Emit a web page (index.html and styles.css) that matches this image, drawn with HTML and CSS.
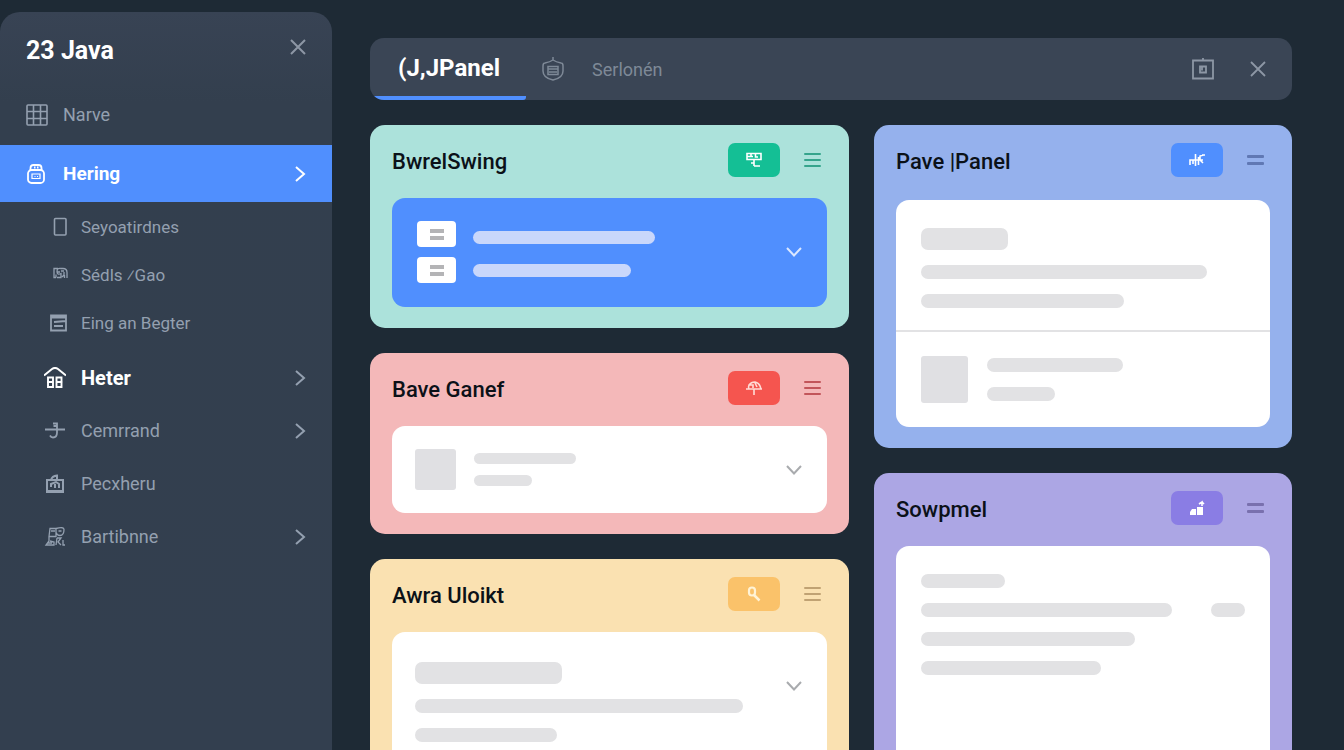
FILE: index.html
```html
<!DOCTYPE html>
<html lang="en">
<head>
<meta charset="utf-8">
<meta name="viewport" content="width=device-width, initial-scale=1">
<title>Java Panel</title>
<link rel="stylesheet" href="styles.css">
</head>
<body>
<div class="app">
  <aside class="sidebar">
    <header class="sidebar-head">
      <h1 class="brand">23 Java</h1>
      <button class="icon-btn" aria-label="Close sidebar"><svg width="16" height="16" viewBox="0 0 16 16"><path d="M1 1l14 14M15 1L1 15"/></svg></button>
    </header>
    <nav class="nav">
      <a class="nav-item nav-first" href="#narve">
        <svg class="icon" width="22" height="22" viewBox="0 0 22 22"><rect x="1" y="1" width="20" height="20" rx="1"/><path d="M7.500 1v20M14.500 1v20M1 7.500h20M1 14.500h20"/></svg>
        <span class="label">Narve</span>
      </a>
      <a class="nav-item nav-active" href="#hering" aria-current="page">
        <svg class="icon" width="22" height="22" viewBox="0 0 22 22"><path d="M4.500 7V5q0-3 3-3h5q3 0 3 3v2M8 4.500h1.500M11 4.500h1.500" stroke-width="1.800"/><rect x="2" y="7" width="16" height="13" rx="3.500" stroke-width="1.800"/><path d="M6 11h8v4.500H6zM8.500 13.500h1M11 13.500h1" stroke-width="1.200"/></svg>
        <span class="label">Hering</span>
        <svg class="chev" width="12" height="16" viewBox="0 0 12 16"><path d="M2 1l8 7-8 7"/></svg>
      </a>
      <div class="subnav">
        <a class="nav-item nav-sub" href="#sub1">
          <svg class="icon" width="22" height="20" viewBox="0 0 22 20"><rect x="7.500" y="1.500" width="11.500" height="16.500" rx="1"/></svg>
          <span class="label">Seyoatirdnes</span>
        </a>
        <a class="nav-item nav-sub" href="#sub2">
          <svg class="icon thin" width="22" height="20" viewBox="0 0 22 20"><path d="M11 3.500H7v9h2M9 9.500v3M10 7h3M14 3.500q-4-1-4 3t4 2v4h-4M14 3.500h2q4 0 4 4v5.500M14 6h3M17 7v3l-2 2M17.500 10v3"/></svg>
          <span class="label">Sédls ⁄Gao</span>
        </a>
        <a class="nav-item nav-sub" href="#sub3">
          <svg class="icon" width="22" height="20" viewBox="0 0 22 20"><path d="M4 2.500h15v15H4zM4 4.500h15M7 9l12-1M7 13h9" stroke-width="1.800"/></svg>
          <span class="label">Eing an Begter</span>
        </a>
      </div>
      <a class="nav-item nav-inner nav-strong" href="#heter">
        <svg class="icon" width="22" height="22" viewBox="0 0 22 22"><path d="M0 8.500L8 2q3-2 6 0l8 6.500" stroke-width="2"/><path d="M4 10.500h5V20H4zM12.500 10.500h5V20h-5zM3 15h6M12.500 15h6" stroke-width="1.900"/></svg>
        <span class="label">Heter</span>
        <svg class="chev" width="12" height="16" viewBox="0 0 12 16"><path d="M2 1l8 7-8 7"/></svg>
      </a>
      <a class="nav-item nav-inner" href="#cemrrand">
        <svg class="icon" width="22" height="22" viewBox="0 0 22 22"><path d="M1 9.500h20" stroke-width="2"/><path d="M9 3.500h4v9q0 5-4 5-2 0-3-2M9.500 6H13" stroke-width="1.800"/></svg>
        <span class="label">Cemrrand</span>
        <svg class="chev" width="12" height="16" viewBox="0 0 12 16"><path d="M2 1l8 7-8 7"/></svg>
      </a>
      <a class="nav-item nav-inner" href="#pecxheru">
        <svg class="icon" width="22" height="22" viewBox="0 0 22 22"><path d="M3 7h16v12H3zM7 7q1-4 6-4.500V7M3 18h16M7 14v-3l5-2 3 2v4M11 11v4" stroke-width="2"/></svg>
        <span class="label">Pecxheru</span>
      </a>
      <a class="nav-item nav-inner" href="#bartibnne">
        <svg class="icon thin" width="22" height="22" viewBox="0 0 22 22"><path d="M6 2.500h6v8H5zM7 5h4M12 2.500q8-2 8 1 0 6-4 6-3 0-4-3M14.500 5h3M5 11v4l-3 4h8v-3l-4-1M13 12l-1 7M13 12h4l-3 4 3 3M19 14v5h2M4 17h4"/></svg>
        <span class="label">Bartibnne</span>
        <svg class="chev" width="12" height="16" viewBox="0 0 12 16"><path d="M2 1l8 7-8 7"/></svg>
      </a>
    </nav>
  </aside>

  <main class="main">
    <header class="topbar">
      <a class="tab tab-active" href="#panel">(J,JPanel</a>
      <a class="tab" href="#serlonen">
        <svg class="icon" width="22" height="24" viewBox="0 0 22 24"><path d="M11 0v3M3 6q5-1 8-3 3 2 8 3 2 0 2 3v5q0 7-10 9Q1 21 1 14V9q0-3 2-3z"/><path d="M6 9.500h10v8H6zM6 12h10M7 15h8"/></svg>
        <span>Serlonén</span>
      </a>
      <div class="topbar-actions">
        <button class="icon-btn" aria-label="Window"><svg width="22" height="24" viewBox="0 0 22 24"><path d="M1 3.500h20v18H1zM11 1v3M8 9.500h6v6H8zM10 9.500v4"/></svg></button>
        <button class="icon-btn" aria-label="Close"><svg width="16" height="16" viewBox="0 0 16 16"><path d="M1 1l14 14M15 1L1 15"/></svg></button>
      </div>
    </header>

    <div class="board">
      <div class="column">
        <section class="card mint">
          <header class="card-head">
            <h2>BwrelSwing</h2>
            <button class="badge" aria-label="Board"><svg width="18" height="16" viewBox="0 0 18 16"><path d="M2 1.500h14v6H2zM2 4.500h6M6 2v3M10.500 2v3H13M9 7.500V14M9 11h-3M9 14h6"/></svg></button>
            <button class="menu" aria-label="Menu"><i></i><i></i><i></i></button>
          </header>
          <div class="panel panel-blue row">
            <div class="thumbs"><span class="thumb"><i></i><i></i></span><span class="thumb"><i></i><i></i></span></div>
            <div class="lines lines-wide"><span class="bar w-182"></span><span class="bar w-158"></span></div>
            <button class="expand" aria-label="Expand"><svg width="16" height="10" viewBox="0 0 16 10"><path d="M1 1l7 7.500L15 1"/></svg></button>
          </div>
        </section>

        <section class="card pink">
          <header class="card-head">
            <h2>Bave Ganef</h2>
            <button class="badge" aria-label="Pin"><svg width="18" height="16" viewBox="0 0 18 16"><path d="M1 9h16M4 9q-1-2 0-4 2-3 6-3 4 1 5 4l1 3M4 5h4v3M10 3l2 4M9 9v6"/></svg></button>
            <button class="menu" aria-label="Menu"><i></i><i></i><i></i></button>
          </header>
          <div class="panel row">
            <span class="square"></span>
            <div class="lines lines-tight"><span class="bar w-102"></span><span class="bar w-58"></span></div>
            <button class="expand" aria-label="Expand"><svg width="16" height="10" viewBox="0 0 16 10"><path d="M1 1l7 7.500L15 1"/></svg></button>
          </div>
        </section>

        <section class="card yellow last">
          <header class="card-head">
            <h2>Awra Uloikt</h2>
            <button class="badge" aria-label="Search"><svg width="18" height="16" viewBox="0 0 18 16"><rect x="4" y="1.500" width="6" height="8" rx="3" stroke-width="2.200"/><path d="M9 9l5.500 5.500" stroke-width="2.500"/></svg></button>
            <button class="menu" aria-label="Menu"><i></i><i></i><i></i></button>
          </header>
          <div class="panel row row-top">
            <div class="lines"><span class="bar tall w-147"></span><span class="bar w-328"></span><span class="bar w-142"></span></div>
            <button class="expand" aria-label="Expand"><svg width="16" height="10" viewBox="0 0 16 10"><path d="M1 1l7 7.500L15 1"/></svg></button>
          </div>
        </section>
      </div>

      <div class="column">
        <section class="card blue">
          <header class="card-head">
            <h2>Pave |Panel</h2>
            <button class="badge" aria-label="Tools"><svg width="18" height="16" viewBox="0 0 18 16"><path d="M2 13V8h3v4M7.500 2v12M4 8h11M10.500 5v8M15.500 3L12 4v4l3 3M14 3h3"/></svg></button>
            <button class="menu menu-two" aria-label="Menu"><i></i><i></i></button>
          </header>
          <div class="panel">
            <div class="block"><div class="lines"><span class="bar tall w-87"></span><span class="bar w-286"></span><span class="bar w-203"></span></div></div>
            <div class="block-media">
              <span class="square square-lg"></span>
              <div class="lines"><span class="bar w-136"></span><span class="bar w-68"></span></div>
            </div>
          </div>
        </section>

        <section class="card purple last">
          <header class="card-head">
            <h2>Sowpmel</h2>
            <button class="badge" aria-label="Chart"><svg width="18" height="16" viewBox="0 0 18 16"><path class="solid" d="M2 15v-3l2-3h4v6zM9 15V7h6v8z"/><path d="M11 4l3-2v4M14 2l2 2"/></svg></button>
            <button class="menu menu-two" aria-label="Menu"><i></i><i></i></button>
          </header>
          <div class="panel">
            <div class="block"><div class="lines">
              <span class="bar w-84"></span>
              <div class="split"><span class="bar w-251"></span><span class="bar w-34"></span></div>
              <span class="bar w-214"></span><span class="bar w-180"></span>
            </div></div>
          </div>
        </section>
      </div>
    </div>
  </main>
</div>
</body>
</html>
```

FILE: styles.css
```css
* { box-sizing: border-box; }

body {
  margin: 0;
  background: #1e2a35;
  font-family: Roboto, "Liberation Sans", sans-serif;
}

h1, h2 { margin: 0; }

a { color: inherit; text-decoration: none; }

button {
  padding: 0;
  border: 0;
  background: none;
  color: inherit;
  cursor: pointer;
}

svg {
  display: block;
  flex: none;
  fill: none;
  stroke: currentColor;
  stroke-width: 2;
}

.app {
  display: flex;
  height: 100vh;
  overflow: hidden;
}

/* Sidebar */
.sidebar {
  flex: 0 0 332px;
  margin-top: 12px;
  border-radius: 20px 20px 0 0;
  background: linear-gradient(#384354, #333f4e 90px, #333f4f);
  color: #94a0b0;
}

.sidebar-head {
  display: flex;
  align-items: center;
  justify-content: space-between;
  height: 76px;
  padding: 0 26px;
}

.sidebar-head .icon-btn { margin-bottom: 6px; }

.brand {
  color: #fff;
  font-size: 25px;
  font-weight: 700;
}

.icon-btn { color: #8d97a5; }

.nav-item {
  display: flex;
  align-items: center;
  height: 53px;
  padding: 0 26px;
  font-size: 18px;
}

.nav-item .icon { stroke-width: 1.6; }
.nav-item .icon.thin { stroke-width: 1.3; }
.nav-item .label { margin-left: 15px; }
.nav-item .chev { margin-left: auto; }

.nav-first { margin-bottom: 4px; }

.nav-active {
  height: 57px;
  background: #508ffe;
  color: #fff;
  font-size: 19px;
  font-weight: 700;
}

.subnav { padding: 1px 0 4px; }

.nav-sub {
  height: 48px;
  padding-left: 47px;
  font-size: 17px;
}

.nav-sub .label { margin-left: 12px; }

.nav-inner { padding-left: 44px; }

.nav-strong .icon,
.nav-strong .label {
  color: #fff;
  font-weight: 700;
}

.nav-strong .label { font-size: 20px; }

/* Main area */
.main {
  flex: 1;
  min-width: 0;
  padding: 38px 52px 0 38px;
  overflow-y: auto;
  scrollbar-width: none;
}

.topbar {
  display: flex;
  height: 62px;
  border-radius: 14px;
  background: #3a4555;
  overflow: hidden;
}

.tab {
  display: flex;
  align-items: center;
  gap: 28px;
  padding-left: 16px;
  color: #7e8997;
  font-size: 18px;
}

.tab .icon { stroke-width: 1.5; }

.tab-active {
  padding: 2px 26px 0 28px;
  border-bottom: 4px solid #508ffe;
  border-bottom-right-radius: 3px;
  color: #fff;
  font-size: 24px;
  font-weight: 700;
}

.topbar-actions {
  display: flex;
  align-items: center;
  gap: 36px;
  margin-left: auto;
  padding-right: 26px;
}

.topbar-actions svg { stroke-width: 1.8; }

.board {
  display: grid;
  grid-template-columns: 479fr 418fr;
  align-items: start;
  gap: 25px;
  margin-top: 25px;
}

.column {
  display: flex;
  flex-direction: column;
  gap: 25px;
}

/* Cards */
.card {
  padding: 18px 22px 21px;
  border-radius: 15px;
}

.card-head {
  display: flex;
  align-items: center;
  height: 34px;
  margin-bottom: 21px;
}

.card-head h2 {
  margin-right: auto;
  padding-top: 3px;
  color: #0b1118;
  font-size: 22px;
  font-weight: 500;
}

.badge {
  display: grid;
  place-items: center;
  width: 52px;
  height: 34px;
  border-radius: 7px;
  color: #fff;
}

.badge svg { stroke-width: 1.6; }
.badge .solid { fill: currentColor; stroke: none; }

.menu {
  display: grid;
  gap: 4px;
  width: 17px;
  margin: 0 6px 0 24px;
}

.menu i {
  height: 2px;
  border-radius: 1px;
  background: currentColor;
}

.menu-two i { height: 3px; }

.mint { background: #ace2db; }
.mint .badge { background: #14bf95; }
.mint .menu { color: #35a48c; }

.pink { background: #f4b8b9; }
.pink .badge { background: #f5554f; color: #ffdcd6; }
.pink .menu { color: #c2555a; }

.yellow { background: #fae1b1; }
.yellow .badge { background: #fac26a; color: #fff3d6; }
.yellow .menu { color: #c0a273; }

.blue { background: #95b1ed; }
.blue .card-head { margin-bottom: 23px; }
.blue .badge { background: #508ffe; }
.blue .menu { color: #6078b4; }

.purple { background: #aca6e4; }
.purple .badge { background: #8a7de4; }
.purple .menu { color: #7970ae; }

.panel {
  border-radius: 13px;
  background: #fff;
}

.last .panel { min-height: 300px; }

.row {
  display: flex;
  align-items: center;
  gap: 18px;
  padding: 23px 25px 23px 23px;
}

.row .lines { flex: 1; }

.panel-blue {
  gap: 17px;
  padding: 23px 25px 24px;
  background: #508ffe;
}

.thumbs {
  display: grid;
  gap: 10px;
}

.thumb {
  display: grid;
  align-content: center;
  justify-items: center;
  gap: 3px;
  width: 39px;
  height: 26px;
  border-radius: 4px;
  background: #fff;
}

.thumb i {
  width: 14px;
  height: 4px;
  background: #b4b4b6;
}

.lines {
  display: grid;
  gap: 15px;
}

.bar {
  height: 14px;
  max-width: 100%;
  border-radius: 7px;
  background: #e2e2e4;
}

.bar.tall { height: 22px; }

.lines-wide { gap: 20px; padding-top: 3px; }
.lines-wide .bar { height: 13px; background: #c9d7fb; }

.lines-tight { gap: 11px; }
.lines-tight .bar { height: 11px; }

.square {
  width: 41px;
  height: 41px;
  border-radius: 3px;
  background: #e0e0e3;
}

.square-lg {
  width: 47px;
  height: 47px;
}

.expand { color: #a9abae; }
.panel-blue .expand { color: #dbe7ff; }

.row-top {
  align-items: flex-start;
  padding-top: 30px;
}

.row-top .expand { margin-top: 19px; }

.block { padding: 28px 25px 22px; }
.blue .block { border-bottom: 2px solid #e2e2e4; }

.block-media {
  display: flex;
  align-items: center;
  gap: 19px;
  padding: 24px 25px;
}

.split {
  display: flex;
  justify-content: space-between;
}

.w-34 { width: 34px; }
.w-58 { width: 58px; }
.w-68 { width: 68px; }
.w-84 { width: 84px; }
.w-87 { width: 87px; }
.w-102 { width: 102px; }
.w-136 { width: 136px; }
.w-142 { width: 142px; }
.w-147 { width: 147px; }
.w-158 { width: 158px; }
.w-180 { width: 180px; }
.w-182 { width: 182px; }
.w-203 { width: 203px; }
.w-214 { width: 214px; }
.w-251 { width: 251px; }
.w-286 { width: 286px; }
.w-328 { width: 328px; }
```
